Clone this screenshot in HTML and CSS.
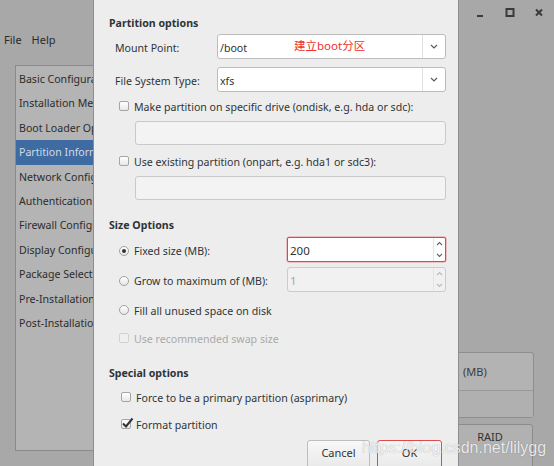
FILE: index.html
```html
<!DOCTYPE html>
<html>
<head>
<meta charset="utf-8">
<link rel="stylesheet" href="styles.css">
</head>
<body>
<div class="screen">
  <div class="main-left">
    <div class="menubar"><span>File</span><span>Help</span></div>
    <div class="steps">
      <div class="step">Basic Configuration</div>
      <div class="step">Installation Method</div>
      <div class="step">Boot Loader Options</div>
      <div class="step sel">Partition Information</div>
      <div class="step">Network Configuration</div>
      <div class="step">Authentication</div>
      <div class="step">Firewall Configuration</div>
      <div class="step">Display Configuration</div>
      <div class="step">Package Selection</div>
      <div class="step">Pre-Installation Script</div>
      <div class="step">Post-Installation Script</div>
    </div>
  </div>

  <div class="dialog">
    <div class="section-title">Partition options</div>
    <div class="field first">
      <div class="label">Mount Point:</div>
      <div class="combo">
        <div class="value">/boot</div>
        <div class="note">建立boot分区</div>
        <div class="arrow"><svg width="8" height="5" viewBox="0 0 8 5"><path d="M1 1 L4 4 L7 1" fill="none" stroke="#5a5a5a" stroke-width="1.2"/></svg></div>
      </div>
    </div>
    <div class="field">
      <div class="label">File System Type:</div>
      <div class="combo">
        <div class="value">xfs</div>
        <div class="arrow"><svg width="8" height="5" viewBox="0 0 8 5"><path d="M1 1 L4 4 L7 1" fill="none" stroke="#5a5a5a" stroke-width="1.2"/></svg></div>
      </div>
    </div>
    <div class="check after-combo"><span class="box"></span><span class="t">Make partition on specific drive (ondisk, e.g. hda or sdc):</span></div>
    <div class="entry"></div>
    <div class="check after-entry"><span class="box"></span><span class="t">Use existing partition (onpart, e.g. hda1 or sdc3):</span></div>
    <div class="entry"></div>

    <div class="section-title size-title">Size Options</div>
    <div class="radio-row fixed">
      <span class="radio on"></span><span class="t">Fixed size (MB):</span>
      <div class="spin spin-marked">
        <div class="spin-value">200</div>
        <div class="spin-btns">
          <svg width="7" height="5" viewBox="0 0 7 5"><path d="M1 4 L3.5 1.5 L6 4" fill="none" stroke="#666" stroke-width="1.1"/></svg>
          <svg width="7" height="5" viewBox="0 0 7 5"><path d="M1 1 L3.5 3.5 L6 1" fill="none" stroke="#666" stroke-width="1.1"/></svg>
        </div>
      </div>
    </div>
    <div class="radio-row grow">
      <span class="radio"></span><span class="t">Grow to maximum of (MB):</span>
      <div class="spin disabled">
        <div class="spin-value">1</div>
        <div class="spin-btns">
          <svg width="7" height="5" viewBox="0 0 7 5"><path d="M1 4 L3.5 1.5 L6 4" fill="none" stroke="#bbb" stroke-width="1.1"/></svg>
          <svg width="7" height="5" viewBox="0 0 7 5"><path d="M1 1 L3.5 3.5 L6 1" fill="none" stroke="#bbb" stroke-width="1.1"/></svg>
        </div>
      </div>
    </div>
    <div class="radio-row fill"><span class="radio"></span><span class="t">Fill all unused space on disk</span></div>
    <div class="check swap dim"><span class="box"></span><span class="t">Use recommended swap size</span></div>

    <div class="section-title special-title">Special options</div>
    <div class="check special force"><span class="box"></span><span class="t">Force to be a primary partition (asprimary)</span></div>
    <div class="check special format"><span class="box checked"><svg class="tick" width="13" height="12" viewBox="0 0 13 12"><path d="M2 6.5 L5 9.5 L11.5 1.5" fill="none" stroke="#2e3436" stroke-width="2"/></svg></span><span class="t">Format partition</span></div>

    <div class="actions">
      <div class="btn cancel">Cancel</div>
      <div class="btn ok">OK</div>
    </div>
  </div>

  <div class="main-right">
    <div class="winctl">
      <svg width="10" height="10" viewBox="0 0 10 10"><rect x="2" y="7" width="6" height="2" fill="#3a3a3a"/></svg>
      <svg width="10" height="10" viewBox="0 0 10 10"><rect x="1.5" y="1" width="7" height="7" fill="none" stroke="#3a3a3a" stroke-width="2"/></svg>
      <svg width="10" height="10" viewBox="0 0 10 10"><path d="M2 1.5 L8 7.5 M8 1.5 L2 7.5" stroke="#3a3a3a" stroke-width="2"/></svg>
    </div>
    <div class="spacer"></div>
    <div class="sizepanel">
      <div class="sizehead">(MB)</div>
      <div class="sizebody"></div>
    </div>
    <div class="raid">RAID</div>
  </div>

  <div class="watermark">https://blog.csdn.net/lilygg</div>
</div>
</body>
</html>
```

FILE: styles.css
```css
* { box-sizing: border-box; }
html, body { margin: 0; padding: 0; }
body {
  width: 554px;
  height: 466px;
  overflow: hidden;
  background: #a8a8a8;
  font-family: "Noto Sans", "Noto Sans CJK SC", sans-serif;
  font-size: 10.6px;
  color: #2e3436;
}
.screen {
  position: relative;
  display: flex;
  width: 554px;
  height: 466px;
}

/* main window (dimmed) left */
.main-left {
  width: 93px;
  flex: none;
  display: flex;
  flex-direction: column;
  overflow: hidden;
}
.menubar {
  display: flex;
  gap: 10px;
  height: 20px;
  margin-top: 29px;
  padding-left: 4px;
  padding-top: 1px;
  align-items: center;
  color: #2a2a2a;
  font-size: 11px;
}
.steps {
  margin-top: 16px;
  margin-left: 15px;
  height: 386px;
  background: #b4b4b4;
  border: 1px solid #8a8a8a;
  border-right: none;
  padding-top: 1px;
}
.step {
  height: 24.4px;
  line-height: 25px;
  padding-left: 3px;
  white-space: nowrap;
  color: #2c2c2c;
}
.step.sel {
  background: #3d6ba2;
  color: #d3dbe5;
}

/* dialog */
.dialog {
  width: 366px;
  flex: none;
  background: #ededed;
  border-left: 1px solid #8e8e8e;
  border-right: 1px solid #8e8e8e;
  padding: 14px 12px 0 15px;
  display: flex;
  flex-direction: column;
  overflow: hidden;
}
.section-title {
  font-weight: bold;
  height: 16px;
  line-height: 18px;
  white-space: nowrap;
  flex: none;
}
.size-title { margin-top: 16px; }
.special-title { margin-top: 18px; }

.t { padding-top: 2px; }

.field {
  display: flex;
  align-items: center;
  height: 25px;
  margin-top: 8px;
  padding-left: 6px;
  flex: none;
}
.field.first { margin-top: 4px; }
.label {
  width: 102px;
  flex: none;
  white-space: nowrap;
  padding-top: 3px;
}
.combo {
  position: relative;
  flex: 1;
  height: 25px;
  display: flex;
  background: #fff;
  border: 1px solid #bcbcbc;
  border-radius: 3px;
}
.combo .value {
  flex: 1;
  padding-left: 2px;
  padding-top: 3px;
  line-height: 20px;
}
.combo .note {
  position: absolute;
  left: 76px;
  top: 3px;
  line-height: 16px;
  font-size: 11.5px;
  color: #f0302c;
  white-space: nowrap;
}
.combo .arrow {
  width: 23px;
  border-left: 1px solid #e0e0e0;
  display: flex;
  align-items: center;
  justify-content: center;
}

.check {
  display: flex;
  align-items: center;
  gap: 5px;
  height: 16px;
  padding-left: 10px;
  white-space: nowrap;
  flex: none;
}
.check.after-combo { margin-top: 6px; }
.check.after-entry { margin-top: 8px; }
.check.swap { margin-top: 12px; }
.check.special { padding-left: 12px; }
.check.force { margin-top: 9px; }
.check.format { margin-top: 11px; }
.check.dim { color: #a9a9a9; }

.box {
  position: relative;
  width: 10px;
  height: 10px;
  flex: none;
  border: 1px solid #a5a5a5;
  border-radius: 2px;
  background: linear-gradient(#ffffff, #e8e8e8);
}
.check.dim .box {
  border-color: #d2d2d2;
  background: #efefef;
}
.tick {
  position: absolute;
  left: -1px;
  top: -3px;
}

.entry {
  height: 24px;
  margin-top: 7px;
  margin-left: 26px;
  background: #f3f3f3;
  border: 1px solid #c9c9c9;
  border-radius: 3px;
  flex: none;
}

.radio-row {
  display: flex;
  align-items: center;
  gap: 5px;
  padding-left: 10px;
  white-space: nowrap;
  flex: none;
}
.radio-row.fixed { height: 25px; margin-top: 5px; }
.radio-row.grow { height: 25px; margin-top: 5px; }
.radio-row.fill { height: 16px; margin-top: 10px; }
.radio-row .t { padding-top: 3px; }
.radio-row.fill .t { padding-top: 2px; }
.radio {
  position: relative;
  width: 10px;
  height: 10px;
  flex: none;
  border: 1px solid #a0a0a0;
  border-radius: 50%;
  background: linear-gradient(#ffffff, #e6e6e6);
}
.radio-row.fixed .radio, .radio-row.grow .radio { margin-top: 3px; }
.radio.on::after {
  content: "";
  position: absolute;
  left: 2px;
  top: 2px;
  width: 4px;
  height: 4px;
  border-radius: 50%;
  background: #2e3436;
}
.spin {
  margin-left: auto;
  width: 159px;
  height: 25px;
  display: flex;
  border-radius: 2px;
}
.spin-marked {
  background: #ffffff;
  border: 1px solid #ef3e44;
  box-shadow: 0 0 0 0.5px rgba(239, 62, 68, 0.5);
}
.spin.disabled {
  background: #f1f1f1;
  border: 1px solid #cbcbcb;
  color: #a5a5a5;
  border-radius: 3px;
}
.spin-value {
  flex: 1;
  padding-left: 2px;
  padding-top: 2px;
  line-height: 21px;
  font-size: 11.5px;
}
.spin-btns {
  width: 12px;
  border-left: 1px solid #e4e4e4;
  display: flex;
  flex-direction: column;
  align-items: center;
  justify-content: space-around;
}

.actions {
  display: flex;
  justify-content: flex-end;
  gap: 7px;
  margin-top: 8px;
  padding-right: 4px;
  flex: none;
}
.btn {
  height: 30px;
  line-height: 24px;
  text-align: center;
  border: 1px solid #bdbdbd;
  border-radius: 3px;
  background: linear-gradient(#f8f8f8, #e8e8e8);
  color: #2e3436;
  font-size: 11px;
}
.btn.cancel { width: 63px; }
.btn.ok { width: 65px; border-color: #e04a4a; }

/* main window (dimmed) right */
.main-right {
  flex: 1;
  display: flex;
  flex-direction: column;
  overflow: hidden;
}
.winctl {
  display: flex;
  gap: 19.5px;
  padding-left: 16px;
  margin-top: 8px;
  height: 10px;
}
.spacer { flex: 1; }
.sizepanel {
  margin-left: -6px;
  width: 81px;
  height: 66px;
  border: 1px solid #8e8e8e;
  border-radius: 3px;
  background: #b3b3b3;
  display: flex;
  flex-direction: column;
}
.sizehead {
  height: 37px;
  line-height: 37px;
  padding-left: 9px;
  color: #3c3c3c;
  font-size: 11px;
}
.sizebody {
  flex: 1;
  border-top: 1px solid #999;
  background: #b0b0b0;
}
.raid {
  margin-top: 6px;
  margin-left: -12px;
  width: 86px;
  height: 50px;
  margin-bottom: -8px;
  border: 1px solid #8b8b8b;
  border-radius: 3px;
  background: #b1b1b1;
  text-align: center;
  padding-top: 5px;
  line-height: 14px;
  color: #333;
  font-size: 11px;
}

.watermark {
  position: absolute;
  left: 362px;
  top: 440px;
  line-height: 16px;
  font-family: "Liberation Sans", Arial, sans-serif;
  font-size: 16px;
  color: rgba(255, 255, 255, 0.85);
  text-shadow: 0 0 1px rgba(0, 0, 0, 0.35);
  white-space: nowrap;
}
```
